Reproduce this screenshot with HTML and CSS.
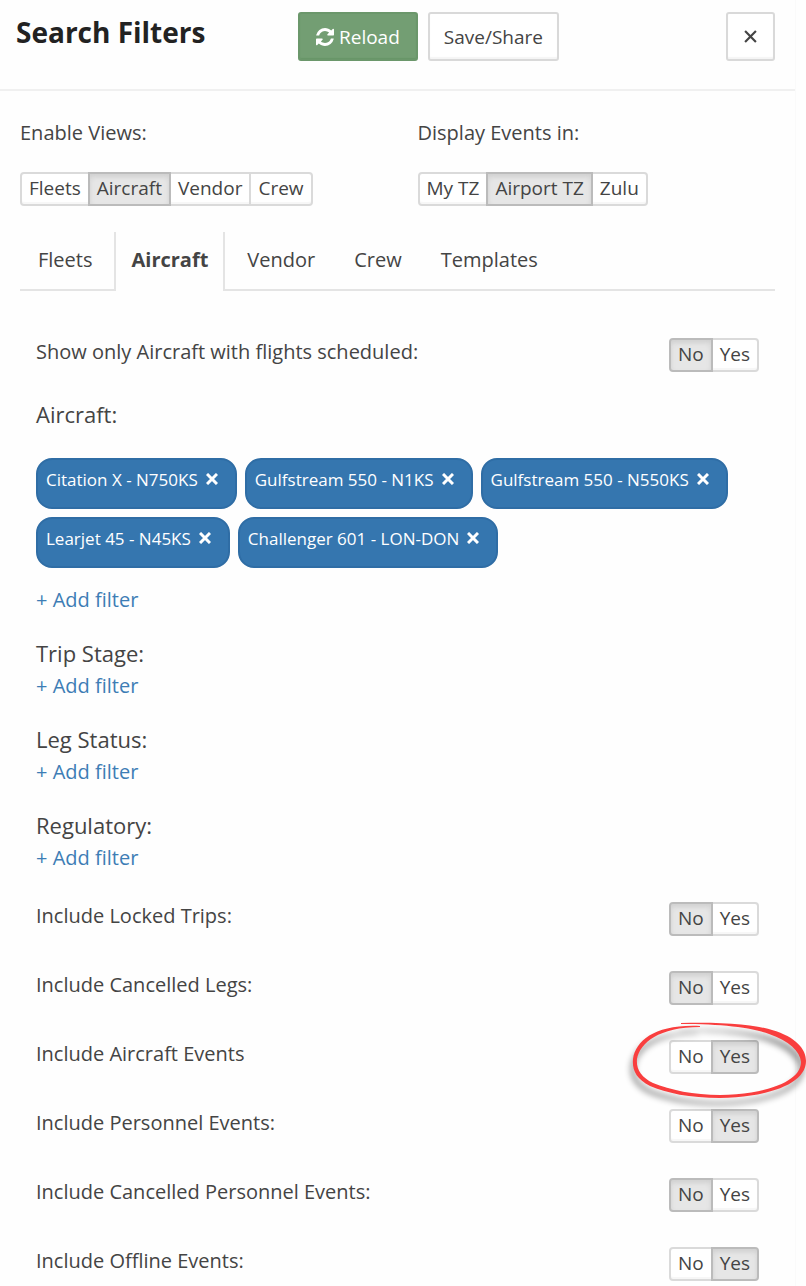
FILE: index.html
```html
<!DOCTYPE html>
<html lang="en">
  <head>
    <meta charset="UTF-8" />
    <meta name="viewport" content="width=device-width, initial-scale=1.0" />
    <title>Search Filters</title>
    <link rel="stylesheet" href="styles.css">
  </head>

  <body>
    <div class="panel">
      <header class="panel-header">
        <h1>Search Filters</h1>
        <div class="actions">
          <button type="button" class="btn btn-success">
            <svg class="icon-refresh" viewBox="0 0 1536 1536" aria-hidden="true">
              <path d="M1511 928q0 5-1 7-64 268-268 434.500T764 1536q-146 0-282.500-55T238 1324l-129 129q-19 19-45 19t-45-19-19-45V960q0-26 19-45t45-19h448q26 0 45 19t19 45-19 45l-137 137q71 66 161 102t187 36q134 0 250-65t186-179q11-17 53-117 8-23 30-23h192q13 0 22.500 9.500t9.500 22.500zM1536 128v448q0 26-19 45t-45 19h-448q-26 0-45-19t-19-45 19-45l138-138Q969 256 768 256q-134 0-250 65T332 500q-11 17-53 117-8 23-30 23H50q-13 0-22.500-9.500T18 608v-7q65-268 270-434.500T768 0q146 0 284 55.500T1297 212l130-129q19-19 45-19t45 19 19 45z" />
            </svg>
            Reload
          </button>
          <button type="button" class="btn">Save/Share</button>
        </div>
        <button type="button" class="btn btn-close" aria-label="Close">
          <svg class="icon-close" viewBox="0 0 12 12" aria-hidden="true">
            <path d="M1 1L11 11M11 1L1 11" />
          </svg>
        </button>
      </header>

      <section class="views">
        <div class="view">
          <p class="label" id="views-label">Enable Views:</p>
          <div class="btn-group" role="group" aria-labelledby="views-label">
            <button type="button">Fleets</button>
            <button type="button" class="active">Aircraft</button>
            <button type="button">Vendor</button>
            <button type="button">Crew</button>
          </div>
        </div>
        <div class="view">
          <p class="label" id="tz-label">Display Events in:</p>
          <div class="btn-group" role="group" aria-labelledby="tz-label">
            <button type="button">My TZ</button>
            <button type="button" class="active">Airport TZ</button>
            <button type="button">Zulu</button>
          </div>
        </div>
      </section>

      <nav class="tabs">
        <a href="#fleets">Fleets</a>
        <a href="#aircraft" class="active">Aircraft</a>
        <a href="#vendor">Vendor</a>
        <a href="#crew">Crew</a>
        <a href="#templates">Templates</a>
      </nav>

      <main class="content" id="aircraft">
        <div class="row">
          <p class="label" id="scheduled">Show only Aircraft with flights scheduled:</p>
          <div class="btn-group" role="group" aria-labelledby="scheduled">
            <button type="button" class="active">No</button>
            <button type="button">Yes</button>
          </div>
        </div>

        <section class="filter filter-aircraft">
          <h2>Aircraft:</h2>
          <div class="chips">
            <button type="button" class="chip">Citation X - N750KS <svg class="icon-remove" viewBox="0 0 12 12" aria-hidden="true"><path d="M1 1L11 11M11 1L1 11" /></svg></button>
            <button type="button" class="chip">Gulfstream 550 - N1KS <svg class="icon-remove" viewBox="0 0 12 12" aria-hidden="true"><path d="M1 1L11 11M11 1L1 11" /></svg></button>
            <button type="button" class="chip">Gulfstream 550 - N550KS <svg class="icon-remove" viewBox="0 0 12 12" aria-hidden="true"><path d="M1 1L11 11M11 1L1 11" /></svg></button>
            <button type="button" class="chip">Learjet 45 - N45KS <svg class="icon-remove" viewBox="0 0 12 12" aria-hidden="true"><path d="M1 1L11 11M11 1L1 11" /></svg></button>
            <button type="button" class="chip">Challenger 601 - LON-DON <svg class="icon-remove" viewBox="0 0 12 12" aria-hidden="true"><path d="M1 1L11 11M11 1L1 11" /></svg></button>
          </div>
          <a href="#" class="add">+ Add filter</a>
        </section>

        <section class="filter">
          <h2>Trip Stage:</h2>
          <a href="#" class="add">+ Add filter</a>
        </section>
        <section class="filter">
          <h2>Leg Status:</h2>
          <a href="#" class="add">+ Add filter</a>
        </section>
        <section class="filter">
          <h2>Regulatory:</h2>
          <a href="#" class="add">+ Add filter</a>
        </section>

        <div class="includes">
          <div class="row">
            <p class="label" id="locked">Include Locked Trips:</p>
            <div class="btn-group" role="group" aria-labelledby="locked">
              <button type="button" class="active">No</button>
              <button type="button">Yes</button>
            </div>
          </div>
          <div class="row">
            <p class="label" id="cancelled">Include Cancelled Legs:</p>
            <div class="btn-group" role="group" aria-labelledby="cancelled">
              <button type="button" class="active">No</button>
              <button type="button">Yes</button>
            </div>
          </div>
          <div class="row">
            <p class="label" id="events">Include Aircraft Events</p>
            <div class="btn-group" role="group" aria-labelledby="events">
              <button type="button">No</button>
              <button type="button" class="active">Yes</button>
              <svg class="marker" viewBox="0 0 174 96" aria-hidden="true">
                <path d="M49 2C88 1 120 3 140 9C164 16 174 28 174 40C174 62 139 76 88 77C58 77 34 72 18 65C4 58 0 49 1 38C4 19 24 3 68 5L68 6C27 6 8 22 5 38C4 48 9 56 21 62C38 69 62 74 88 74C136 73 169 60 169 41C168 30 157 20 137 13C118 6 88 3 49 3Z" />
              </svg>
            </div>
          </div>
          <div class="row">
            <p class="label" id="personnel">Include Personnel Events:</p>
            <div class="btn-group" role="group" aria-labelledby="personnel">
              <button type="button">No</button>
              <button type="button" class="active">Yes</button>
            </div>
          </div>
          <div class="row">
            <p class="label" id="cancelled-personnel">Include Cancelled Personnel Events:</p>
            <div class="btn-group" role="group" aria-labelledby="cancelled-personnel">
              <button type="button" class="active">No</button>
              <button type="button">Yes</button>
            </div>
          </div>
          <div class="row">
            <p class="label" id="offline">Include Offline Events:</p>
            <div class="btn-group" role="group" aria-labelledby="offline">
              <button type="button">No</button>
              <button type="button" class="active">Yes</button>
            </div>
          </div>
        </div>
      </main>
    </div>
  </body>
</html>
```
FILE: styles.css
```css
* {
  box-sizing: border-box;
}

body {
  margin: 0;
  font-family: "Open Sans", sans-serif;
  font-size: 20px;
  line-height: 28px;
  background: #fefefe;
  color: #444;
}

h1,
h2,
p {
  margin: 0;
}

button {
  font-family: inherit;
  color: inherit;
  cursor: pointer;
}

.panel {
  margin-right: 10px;
  border-right: 1px solid #fafafa;
}

/* Header */
.panel-header {
  display: flex;
  align-items: flex-start;
  padding: 12px 20px 28px 16px;
  border-bottom: 2px solid #f0f0f0;
}

.panel-header h1 {
  flex: 0 0 282px;
  font-size: 28px;
  line-height: 40px;
  font-weight: 700;
  color: #222;
}

.actions {
  display: flex;
  gap: 10px;
}

.btn {
  display: flex;
  align-items: center;
  justify-content: center;
  gap: 5px;
  height: 49px;
  padding: 0 14px;
  font-size: 19px;
  background: #fff;
  border: 2px solid #d9d9d9;
  border-radius: 3px;
  box-shadow: inset 0 -2px 1px #f5f5f5;
}

.btn-success {
  padding: 0 16px;
  color: #fff;
  background: #739e73;
  border-color: #6b976b;
  box-shadow: inset 0 -1px 1px #689568;
}

.btn-close {
  width: 49px;
  margin-left: auto;
  padding: 0;
}

.icon-refresh {
  width: 18px;
  height: 18px;
  fill: #fff;
}

.icon-close {
  width: 13px;
  height: 13px;
  fill: none;
  stroke: #444;
  stroke-width: 2;
}

/* Button groups */
.btn-group {
  position: relative;
  display: inline-flex;
}

.btn-group button {
  height: 34px;
  padding: 0 7px 2px;
  font-size: 19px;
  line-height: 28px;
  background: #fff;
  border: 2px solid #dadada;
  box-shadow: inset 0 -2px 1px #f7f7f7;
}

.btn-group button + button {
  margin-left: -2px;
}

.btn-group button:first-of-type {
  border-radius: 4px 0 0 4px;
}

.btn-group button:last-of-type {
  border-radius: 0 4px 4px 0;
}

.btn-group .active {
  z-index: 1;
  background: #e6e6e6;
  border-color: #bbb;
  box-shadow: inset 0 3px 5px #d0d0d0;
}

/* Views */
.views {
  display: grid;
  grid-template-columns: 1fr 1fr;
  padding: 28px 0 26px;
}

.view {
  display: flex;
  flex-direction: column;
  align-items: flex-start;
  gap: 25px;
  padding-left: 20px;
}

/* Tabs */
.tabs {
  display: flex;
  gap: 4px;
  margin: 0 20px;
  border-bottom: 2px solid #e4e4e4;
}

.tabs a {
  height: 59px;
  margin-bottom: -2px;
  padding: 14px 15px 0 16px;
  border: solid transparent;
  border-width: 0 2px;
  color: inherit;
  text-decoration: none;
}

.tabs .active {
  font-weight: 700;
  background: #fefefe;
  border-color: #e4e4e4;
}

/* Content */
.content {
  padding: 47px 36px 5px;
}

.row {
  display: flex;
  justify-content: space-between;
  align-items: flex-start;
}

.filter {
  display: flex;
  flex-direction: column;
  align-items: flex-start;
  gap: 5px;
  margin-top: 25px;
}

.filter h2 {
  font-size: 22px;
  font-weight: 400;
}

.filter-aircraft {
  gap: 18px;
  margin-top: 28px;
}

.add {
  color: #3d7db5;
  text-decoration: none;
}

.chips {
  display: flex;
  flex-wrap: wrap;
  gap: 8px;
  padding-top: 12px;
}

.chip {
  display: flex;
  gap: 8px;
  height: 51px;
  padding: 7px 17px 0 8px;
  font-size: 17px;
  line-height: 25px;
  color: #fff;
  background: #3576af;
  border: 2px solid #2f6da5;
  border-radius: 16px;
}

.icon-remove {
  width: 12px;
  height: 12px;
  margin-top: 6px;
  fill: none;
  stroke: #fff;
  stroke-width: 3;
}

.includes {
  display: flex;
  flex-direction: column;
  gap: 35px;
  margin-top: 30px;
}

/* Hand-drawn ring over the toggle */
.marker {
  position: absolute;
  z-index: 2;
  top: -19px;
  left: -37px;
  width: 174px;
  height: 96px;
  fill: #f93e3e;
  filter: drop-shadow(-2px 7px 3px rgba(0, 0, 0, 0.45));
  pointer-events: none;
}
```
